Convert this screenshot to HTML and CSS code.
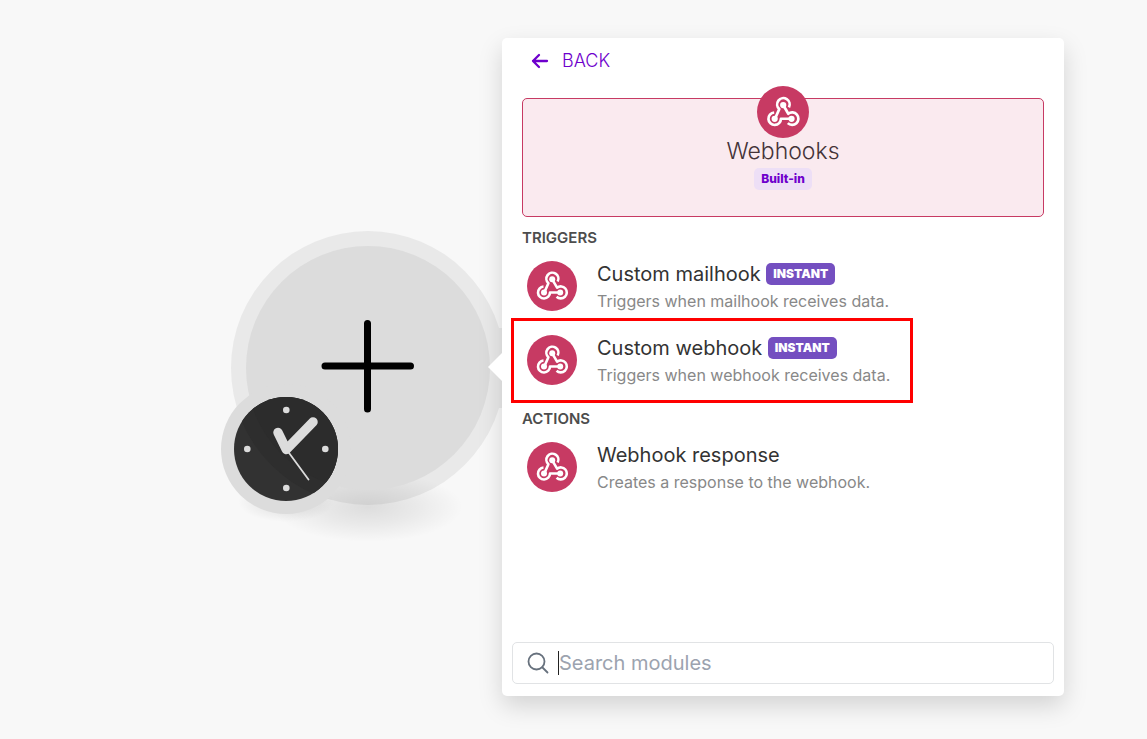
FILE: index.html
```
<!DOCTYPE html>
<html lang="en">
<head>
  <meta charset="UTF-8">
  <meta name="viewport" content="width=device-width, initial-scale=1.0">
  <title>Webhooks</title>
  <link rel="stylesheet" href="styles.css">
</head>
<body>
  <!-- Shared webhook icon -->
  <svg class="sprite" aria-hidden="true">
    <symbol id="webhook" viewBox="0 0 50 50">
      <circle cx="25" cy="25" r="25" fill="#c73a63"/>
      <g fill="none" stroke="#fff" stroke-width="2.6" stroke-linejoin="round">
        <path d="M30.700 20.500a6 6 0 1 0-9.300 1.700L17.500 31"/>
        <path d="M16.500 25.500a6 6 0 1 0 6.500 6H32.500"/>
        <path d="M25.200 18.300l4.900 8.400a6 6 0 1 1-.500 9"/>
      </g>
      <g fill="#fff">
        <circle cx="25.200" cy="18.300" r="3"/>
        <circle cx="17" cy="31.500" r="3"/>
        <circle cx="33.200" cy="31.500" r="3"/>
      </g>
    </symbol>
  </svg>

  <main class="canvas">
    <!-- Empty module with the schedule clock -->
    <svg class="module" viewBox="221 230 281 274" role="img" aria-label="Add a module">
      <defs>
        <radialGradient id="shadow">
          <stop offset="0" stop-color="#000" stop-opacity=".11"/>
          <stop offset=".5" stop-color="#000" stop-opacity=".06"/>
          <stop offset="1" stop-color="#000" stop-opacity="0"/>
        </radialGradient>
        <clipPath id="face"><circle cx="286" cy="449" r="52"/></clipPath>
      </defs>
      <path d="M496 328h10v80h-10z" fill="#e9e9e9"/>
      <circle cx="368" cy="368" r="137" fill="#e9e9e9"/>
      <ellipse cx="368" cy="507" rx="95" ry="35" fill="url(#shadow)"/>
      <circle cx="368" cy="368" r="122" fill="#dcdcdc"/>
      <path d="M325 366h85.500M367.500 323.500v85.500" stroke="#000" stroke-width="7" stroke-linecap="round"/>
      <ellipse cx="286" cy="502" rx="48" ry="20" fill="url(#shadow)"/>
      <circle cx="286" cy="449" r="65" fill="#dcdcdc"/>
      <circle cx="286" cy="449" r="52" fill="#323232"/>
      <g clip-path="url(#face)" fill="#2e2e2e">
        <circle cx="368" cy="368" r="137"/>
        <circle cx="368" cy="368" r="122" fill="#2c2c2c"/>
      </g>
      <g fill="#dcdcdc">
        <circle cx="286.300" cy="410" r="3.300"/>
        <circle cx="325.300" cy="449" r="3.300"/>
        <circle cx="286.300" cy="488" r="3.300"/>
        <circle cx="247.300" cy="449" r="3.300"/>
      </g>
      <g fill="none" stroke="#dcdcdc" stroke-linecap="round" stroke-linejoin="round">
        <path d="M278 432.500l8.300 17 26.700-27.500" stroke-width="9.500"/>
        <path d="M286.500 449.500l22 30" stroke-width="1.800"/>
      </g>
    </svg>

    <section class="panel">
      <button class="back" type="button">
        <svg class="back-icon" viewBox="0 0 18 18" aria-hidden="true">
          <path d="M8 3L2 9l6 6M2 9h14" fill="none" stroke="currentColor" stroke-width="2.300" stroke-linecap="round" stroke-linejoin="round"/>
        </svg>
        BACK
      </button>

      <header class="app">
        <svg class="app-icon" aria-hidden="true"><use href="#webhook"/></svg>
        <h1 class="app-name">Webhooks</h1>
        <span class="app-tag">Built-in</span>
      </header>

      <div class="modules">
        <h2 class="group-title">TRIGGERS</h2>
        <ul class="group">
          <li>
            <button class="item" type="button">
              <svg class="item-icon" aria-hidden="true"><use href="#webhook"/></svg>
              <span class="item-text">
                <span class="item-name">Custom mailhook <span class="badge">INSTANT</span></span>
                <span class="item-desc">Triggers when mailhook receives data.</span>
              </span>
            </button>
          </li>
          <li>
            <button class="item item--marked" type="button">
              <svg class="item-icon" aria-hidden="true"><use href="#webhook"/></svg>
              <span class="item-text">
                <span class="item-name">Custom webhook <span class="badge">INSTANT</span></span>
                <span class="item-desc">Triggers when webhook receives data.</span>
              </span>
            </button>
          </li>
        </ul>
        <h2 class="group-title">ACTIONS</h2>
        <ul class="group">
          <li>
            <button class="item" type="button">
              <svg class="item-icon" aria-hidden="true"><use href="#webhook"/></svg>
              <span class="item-text">
                <span class="item-name">Webhook response</span>
                <span class="item-desc">Creates a response to the webhook.</span>
              </span>
            </button>
          </li>
        </ul>
      </div>

      <label class="search">
        <svg class="search-icon" viewBox="0 0 22 22" aria-hidden="true">
          <path d="M15 15l5.500 5.500M17.500 9.500a8 8 0 1 1-16 0 8 8 0 0 1 16 0z" fill="none" stroke="currentColor" stroke-width="1.800" stroke-linecap="round"/>
        </svg>
        <span class="caret"></span>
        <input class="search-input" type="text" placeholder="Search modules" aria-label="Search modules">
      </label>
    </section>
  </main>
</body>
</html>
```
FILE: styles.css
```
*,
*::before,
*::after {
  margin: 0;
  padding: 0;
  box-sizing: border-box;
}

body {
  font-family: Inter, "Liberation Sans", sans-serif;
  background-color: #f8f8f8;
  color: #333;
}

button,
input {
  font: inherit;
  color: inherit;
  background: none;
  border: none;
}

button {
  cursor: pointer;
}

ul {
  list-style: none;
}

.sprite {
  position: absolute;
  width: 0;
  height: 0;
}

.canvas {
  display: flex;
  align-items: center;
  min-height: 100vh;
  padding: 38px 83px 43px 221px;
}

.module {
  flex: none;
  width: 281px;
  height: 274px;
  overflow: visible;
}

/* Panel */
.panel {
  position: relative;
  display: flex;
  flex: 1;
  flex-direction: column;
  align-self: stretch;
  padding: 8px 10px 12px;
  background-color: #fff;
  border-radius: 5px;
  box-shadow: 0 10px 25px rgba(0, 0, 0, 0.15);
}

.panel::before {
  content: "";
  position: absolute;
  top: 50%;
  right: 100%;
  border: 14px solid transparent;
  border-left-width: 0;
  border-right-color: #fff;
  transform: translateY(-50%);
}

.back {
  display: flex;
  align-items: center;
  align-self: flex-start;
  gap: 13px;
  padding: 0 19px;
  font-size: 18px;
  font-weight: 350;
  line-height: 30px;
  color: #6e00cc;
}

.back-icon {
  width: 18px;
  height: 18px;
}

/* App card */
.app {
  display: flex;
  flex-direction: column;
  align-items: center;
  min-height: 119px;
  margin: 22px 10px 6px;
  background-color: #faeaef;
  border: 1px solid #c73a63;
  border-radius: 5px;
}

.app-icon {
  width: 52px;
  height: 52px;
  margin-top: -13px;
}

.app-name {
  font-size: 23px;
  font-weight: 350;
  line-height: 26px;
  color: #443338;
}

.app-tag {
  margin-top: 4px;
  padding: 0 7px;
  font-size: 12px;
  font-weight: 800;
  line-height: 22px;
  color: #6e00cc;
  background-color: #eddff6;
  border-radius: 5px;
}

/* Module list */
.modules {
  flex: 1;
}

.group {
  margin-bottom: 3px;
}

.group-title {
  padding: 0 10px;
  font-size: 15px;
  font-weight: 600;
  line-height: 30px;
  color: #4d4d4d;
}

.item {
  position: relative;
  display: flex;
  gap: 20px;
  width: 100%;
  padding: 8px 15px 16px;
  text-align: left;
}

/* Red frame round the module to pick */
.item--marked::after {
  content: "";
  position: absolute;
  top: -9px;
  bottom: -2px;
  left: -1px;
  width: 402px;
  border: 3px solid #f00;
}

.item-icon {
  flex: none;
  width: 50px;
  height: 50px;
}

.item-text,
.item-name,
.item-desc {
  display: block;
}

.item-name {
  font-size: 20px;
  line-height: 26px;
}

.item-desc {
  padding-top: 4px;
  font-size: 16px;
  line-height: 20px;
  color: #888;
}

.badge {
  display: inline-block;
  margin-top: 2px;
  padding: 0 7px;
  font-size: 12px;
  font-weight: 900;
  line-height: 22px;
  vertical-align: top;
  color: #fff;
  background-color: #744fc0;
  border-radius: 5px;
}

/* Search */
.search {
  display: flex;
  align-items: center;
  height: 42px;
  padding: 0 14px;
  color: #67717d;
  border: 1px solid #e1e3e5;
  border-radius: 5px;
}

.search-icon {
  flex: none;
  width: 22px;
  height: 22px;
}

.caret {
  width: 1px;
  height: 24px;
  margin-left: 9px;
  background-color: #222;
}

.search-input {
  flex: 1;
  min-width: 0;
  font-size: 20px;
  line-height: 24px;
  outline: none;
}

.search-input::placeholder {
  color: #9ca3af;
  opacity: 1;
}
```
